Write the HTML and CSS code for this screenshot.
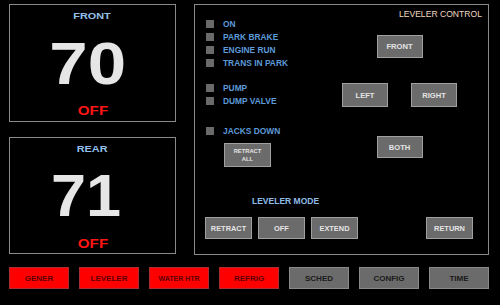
FILE: index.html
```html
<!DOCTYPE html>
<html lang="en">
<head>
  <meta charset="UTF-8" />
  <meta name="viewport" content="width=device-width, initial-scale=1.0" />
  <title>Leveler</title>
  <link rel="stylesheet" href="styles.css">
</head>
<body>
  <div class="top">
    <div class="temps">
      <div class="temp temp-front">
        <div class="temp-label">FRONT</div>
        <div class="temp-value">70</div>
        <div class="temp-state">OFF</div>
      </div>
      <div class="temp temp-rear">
        <div class="temp-label">REAR</div>
        <div class="temp-value">71</div>
        <div class="temp-state">OFF</div>
      </div>
    </div>

    <div class="leveler">
      <div class="lc-title">LEVELER CONTROL</div>
      <div class="lc-grid">
        <div class="lights">
          <div class="light"><span class="lamp"></span>ON</div>
          <div class="light"><span class="lamp"></span>PARK BRAKE</div>
          <div class="light"><span class="lamp"></span>ENGINE RUN</div>
          <div class="light"><span class="lamp"></span>TRANS IN PARK</div>
        </div>
        <div class="pad pad-front"><button class="btn">FRONT</button></div>

        <div class="lights lights-pump">
          <div class="light"><span class="lamp"></span>PUMP</div>
          <div class="light"><span class="lamp"></span>DUMP VALVE</div>
        </div>
        <div class="pad pad-sides">
          <button class="btn">LEFT</button>
          <button class="btn">RIGHT</button>
        </div>

        <div class="lights lights-jacks">
          <div class="light"><span class="lamp"></span>JACKS DOWN</div>
          <button class="btn btn-small">RETRACT<br>ALL</button>
        </div>
        <div class="pad pad-both"><button class="btn">BOTH</button></div>
      </div>

      <div class="mode-label">LEVELER MODE</div>
      <div class="mode-row">
        <button class="btn btn-mode">RETRACT</button>
        <button class="btn btn-mode">OFF</button>
        <button class="btn btn-mode">EXTEND</button>
        <button class="btn btn-mode btn-return">RETURN</button>
      </div>
    </div>
  </div>

  <div class="nav">
    <button class="nav-btn red">GENER</button>
    <button class="nav-btn red">LEVELER</button>
    <button class="nav-btn red small">WATER HTR</button>
    <button class="nav-btn red">REFRIG</button>
    <button class="nav-btn">SCHED</button>
    <button class="nav-btn">CONFIG</button>
    <button class="nav-btn">TIME</button>
  </div>
</body>
</html>
```

FILE: styles.css
```css
* {
  box-sizing: border-box;
}
body {
  margin: 0;
  width: 500px;
  height: 305px;
  padding: 4px 0 0 9px;
  background-color: #000;
  font-family: "Liberation Sans", Arial, sans-serif;
  overflow: hidden;
}
.top {
  display: flex;
  gap: 18px;
  height: 251px;
}

/* temperature panels */
.temps {
  display: flex;
  flex-direction: column;
  gap: 15px;
  width: 167px;
}
.temp {
  display: flex;
  flex-direction: column;
  align-items: center;
  height: 118px;
  border: 1px solid #8a8a8a;
  padding-top: 5px;
}
.temp-rear {
  height: 117px;
}
.temp-label {
  font-size: 9.3px;
  font-weight: bold;
  line-height: 12px;
  color: #93c0ea;
  transform: scaleX(1.17);
}
.temp-value {
  margin-top: 12px;
  padding-right: 9px;
  font-size: 60px;
  font-weight: bold;
  line-height: 60px;
  color: #e6e6e6;
  transform: scaleX(1.15);
}
.temp-state {
  margin-top: 10px;
  font-size: 13px;
  font-weight: bold;
  line-height: 13px;
  color: #ff1414;
  transform: scaleX(1.17);
}
.temp-rear .temp-value {
  margin-top: 11px;
  padding-right: 12px;
  transform: scaleX(1.05);
}
.temp-rear .temp-state {
  margin-top: 11px;
}

/* leveler control */
.leveler {
  width: 295px;
  border: 1px solid #8a8a8a;
  padding: 4px 6px 0 11px;
}
.lc-title {
  text-align: right;
  font-size: 8.6px;
  line-height: 11px;
  color: #f0d8c2;
  margin-bottom: -3px;
}
.lc-grid {
  display: grid;
  grid-template-columns: 136px 115px;
  align-items: start;
}
.light {
  display: flex;
  align-items: center;
  height: 13px;
  font-size: 8.4px;
  font-weight: bold;
  color: #5d9bd9;
}
.lamp {
  width: 8px;
  height: 8px;
  margin-right: 9px;
  background: #6a6a6a;
}
.lights-pump {
  padding-top: 12px;
}
.lights-jacks {
  padding-top: 17px;
}
.pad {
  display: flex;
  justify-content: center;
}
.pad-front {
  margin-top: 18px;
}
.pad-sides {
  margin-top: 14px;
  justify-content: space-between;
}
.pad-sides .btn {
  height: 24px;
}
.pad-both {
  margin-top: 29px;
}
.pad-both .btn {
  height: 22px;
}
.btn {
  width: 46px;
  height: 23px;
  padding: 0;
  background: #6b6b6b;
  border: 1px solid #a0a0a0;
  color: #e4e4e4;
  font-family: inherit;
  font-size: 7.6px;
  font-weight: bold;
}
.btn-small {
  display: block;
  width: 47px;
  height: 24px;
  margin: 6px 0 0 18px;
  font-size: 5.8px;
  line-height: 8px;
}
.mode-label {
  margin: 28px 0 0 46px;
  font-size: 8.5px;
  font-weight: bold;
  line-height: 12px;
  color: #8fbde6;
}
.mode-row {
  display: flex;
  gap: 6px;
  margin: 10px 0 0 -1px;
}
.btn-mode {
  width: 47px;
  height: 22px;
  font-size: 7.4px;
}
.btn-return {
  margin-left: 62px;
}

/* bottom navigation */
.nav {
  display: flex;
  gap: 10px;
  margin-top: 12px;
}
.nav-btn {
  width: 60px;
  height: 22px;
  padding: 0;
  background: #6b6b6b;
  border: 1px solid #8a8a8a;
  color: #1a1a1a;
  font-family: inherit;
  font-size: 8px;
  font-weight: bold;
}
.nav-btn.red {
  background: #ff0000;
  border-color: #a83030;
  color: #5c0000;
}
.nav-btn.small {
  font-size: 7px;
}
```
